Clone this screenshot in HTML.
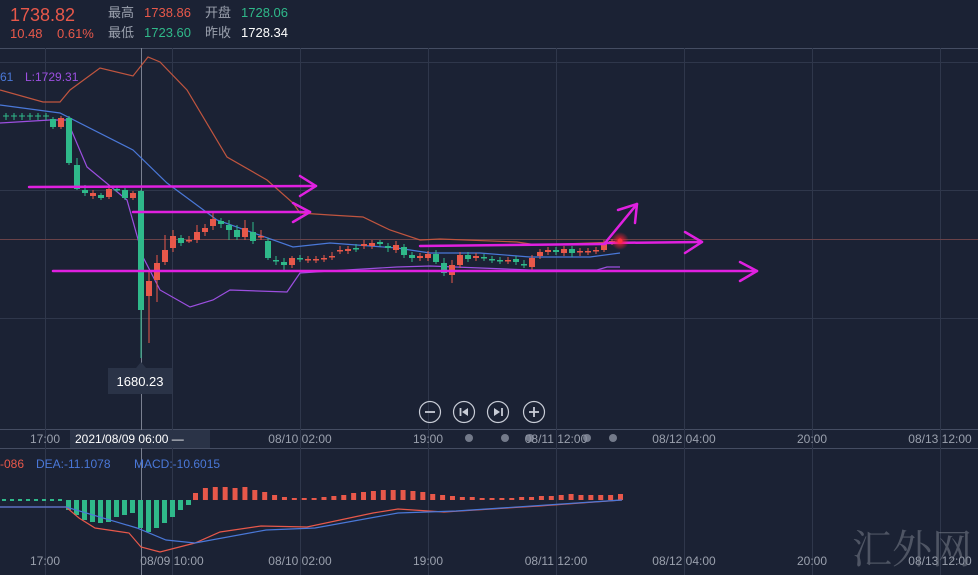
<!DOCTYPE html>
<html><head><meta charset="utf-8"><style>
html,body{margin:0;padding:0;background:#1b2234;width:978px;height:575px;overflow:hidden;font-family:"Liberation Sans","Noto Sans CJK SC",sans-serif}
svg{display:block}
</style></head><body>
<svg id="s" width="978" height="575" xmlns="http://www.w3.org/2000/svg" font-family="Liberation Sans, Noto Sans CJK SC, sans-serif">
<rect width="978" height="575" fill="#1b2234"/>
<defs><radialGradient id="g"><stop offset="0" stop-color="#ff2030" stop-opacity="1"/><stop offset="1" stop-color="#ff2030" stop-opacity="0"/></radialGradient></defs>
<g stroke="#2f374b" stroke-width="1" id="grid">
<line x1="0" y1="48.5" x2="978" y2="48.5" stroke="#454d62"/>
<line x1="0" y1="62.5" x2="978" y2="62.5"/>
<line x1="0" y1="190.5" x2="978" y2="190.5"/>
<line x1="0" y1="318.5" x2="978" y2="318.5"/>
<line x1="0" y1="429.5" x2="978" y2="429.5" stroke="#454d62"/>
<line x1="0" y1="448.5" x2="978" y2="448.5" stroke="#454d62"/>
</g>
<line x1="0" y1="239.5" x2="978" y2="239.5" stroke="#6a4248" stroke-width="1"/>
<line x1="141.5" y1="48" x2="141.5" y2="575" stroke="#7a8090" stroke-width="1"/>
<text x="10" y="21" font-size="18" fill="#e8584a">1738.82</text>
<text x="10" y="38" font-size="13" fill="#e8584a">10.48</text>
<text x="57" y="38" font-size="13" fill="#e8584a">0.61%</text>
<text x="108" y="17" font-size="13" fill="#9aa0ad">最高</text>
<text x="144" y="17" font-size="13" fill="#e8584a">1738.86</text>
<text x="205" y="17" font-size="13" fill="#9aa0ad">开盘</text>
<text x="241" y="17" font-size="13" fill="#2fb98a">1728.06</text>
<text x="108" y="37" font-size="13" fill="#9aa0ad">最低</text>
<text x="144" y="37" font-size="13" fill="#2fb98a">1723.60</text>
<text x="205" y="37" font-size="13" fill="#9aa0ad">昨收</text>
<text x="241" y="37" font-size="13" fill="#ffffff">1728.34</text>
<text x="0" y="81" font-size="12" fill="#4a78d8">61</text>
<text x="25" y="81" font-size="12" fill="#9c4fe0">L:1729.31</text>
<polyline fill="none" stroke="#c0553f" stroke-width="1.2" points="0,90 43,102 60,102 70,90 100,68 133,76 148,57 160,62 187,90 227,157 267,180 293,203 300,213 330,215 363,217 390,230 420,240 440,239 517,242 537,245 617,242"/>
<polyline fill="none" stroke="#4a78d8" stroke-width="1.2" points="0,105 60,113 133,150 167,183 217,220 293,247 330,243 397,248 430,253 480,253 530,257 590,257 620,253"/>
<polyline fill="none" stroke="#9c4fe0" stroke-width="1.2" points="0,123 50,120 67,120 87,167 127,200 143,257 160,290 190,307 213,300 230,290 287,292 300,273 330,271 397,267 430,266 530,270 597,270 607,267 620,267"/>
<g id="candles"></g>
<g stroke="#e020e0" stroke-width="2.5" fill="none" stroke-linecap="round" stroke-linejoin="round">
<line x1="29" y1="187" x2="316" y2="186"/><polyline points="300,176 316,186 300,196"/>
<line x1="133" y1="212" x2="310" y2="212"/><polyline points="293,203 310,212 293,222"/>
<line x1="53" y1="271" x2="757" y2="271"/><polyline points="740,262 757,271 740,281"/>
<line x1="420" y1="246" x2="605" y2="244"/>
<line x1="605" y1="243" x2="702" y2="242"/><polyline points="685,232 702,242 685,253"/>
<line x1="605" y1="243" x2="637" y2="204"/><polyline points="618,210 637,204 635,223"/>
</g>
<circle cx="620" cy="241" r="9" fill="url(#g)"/>
<circle cx="620" cy="241" r="2.5" fill="#ff3040"/>
<polygon points="136,368 141,362 146,368" fill="#2a3347"/>
<rect x="108" y="368" width="64" height="26" fill="#2a3347"/>
<text x="140" y="386" font-size="13" fill="#ffffff" text-anchor="middle">1680.23</text>
<g stroke="#c8ccd6" stroke-width="1.2" fill="none">
<circle cx="430" cy="412" r="10.5"/><circle cx="464" cy="412" r="10.5"/><circle cx="498" cy="412" r="10.5"/><circle cx="534" cy="412" r="10.5"/>
<line x1="425" y1="412" x2="435" y2="412" stroke-width="1.8"/>
<line x1="529" y1="412" x2="539" y2="412" stroke-width="1.8"/><line x1="534" y1="407" x2="534" y2="417" stroke-width="1.8"/>
<line x1="460.5" y1="408" x2="460.5" y2="416" stroke-width="1.8"/>
<line x1="502" y1="408" x2="502" y2="416" stroke-width="1.8"/>
</g>
<polygon points="468,408 468,416 462,412" fill="#c8ccd6"/>
<polygon points="494,408 494,416 500,412" fill="#c8ccd6"/>
<rect x="70" y="430" width="140" height="18" fill="#2a3347"/>
<g font-size="12" fill="#9aa0ad">
<text x="45" y="443" text-anchor="middle">17:00</text>
<text x="75" y="443" fill="#ffffff">2021/08/09 06:00 —</text>
<text x="300" y="443" text-anchor="middle">08/10 02:00</text>
<text x="428" y="443" text-anchor="middle">19:00</text>
<text x="556" y="443" text-anchor="middle">08/11 12:00</text>
<text x="684" y="443" text-anchor="middle">08/12 04:00</text>
<text x="812" y="443" text-anchor="middle">20:00</text>
<text x="940" y="443" text-anchor="middle">08/13 12:00</text>
</g>
<g fill="#8a90a0" opacity="0.8"><circle cx="469" cy="438" r="4"/><circle cx="505" cy="438" r="4"/><circle cx="530" cy="438" r="4"/><circle cx="587" cy="438" r="4"/><circle cx="613" cy="438" r="4"/></g>
<text x="0" y="468" font-size="12" fill="#e8584a">-086</text>
<text x="36" y="468" font-size="12" fill="#4a78d8">DEA:-11.1078</text>
<text x="134" y="468" font-size="12" fill="#4a78d8">MACD:-10.6015</text>
<g id="bars"></g>
<polyline fill="none" stroke="#e8584a" stroke-width="1.2" points="0,507 66,507 79,518 95,528 129,533 141,547 160,552 195,543 220,532 261,526 307,527 373,513 398,509 444,512 539,506 622,500"/>
<polyline fill="none" stroke="#4a78d8" stroke-width="1.2" points="0,507 66,507 137,528 166,540 195,543 266,530 315,528 398,513 456,511 622,500"/>
<g font-size="12" fill="#9aa0ad" text-anchor="middle">
<text x="45" y="565">17:00</text>
<text x="172" y="565">08/09 10:00</text>
<text x="300" y="565">08/10 02:00</text>
<text x="428" y="565">19:00</text>
<text x="556" y="565">08/11 12:00</text>
<text x="684" y="565">08/12 04:00</text>
<text x="812" y="565">20:00</text>
<text x="940" y="565">08/13 12:00</text>
</g>
<text x="912" y="563" font-size="40" fill="#7a808c" opacity="0.55" text-anchor="middle" font-family="Noto Serif CJK SC, serif">汇外网</text>
</svg>
<script>
var NS="http://www.w3.org/2000/svg";
function el(p,t,a){var e=document.createElementNS(NS,t);for(var k in a)e.setAttribute(k,a[k]);p.appendChild(e);return e;}
var g=document.getElementById('grid');
[45,172,300,428,556,684,812,940].forEach(function(x){el(g,'line',{x1:x+.5,y1:48,x2:x+.5,y2:575});});
var G="#2fb98a",R="#e8584a";
var c=[[53,119,127,G],[61,118,127,R],[69,118,163,G],[77,165,189,G,158,190],[85,190,193,G,185,196],[93,193,196,R,190,199],[101,195,198,G],[109,189,197,R],[117,189,190,G],[125,190,198,G],[133,193,198,R],[141,191,310,G,190,358],[149,281,296,R,270,343],[157,263,280,R,255,302],[165,250,262,R,235,265],[173,236,248,R,230,252],[181,238,243,G,235,246],[189,240,241,R,236,243],[197,232,240,R,225,243],[205,228,232,R,224,236],[213,219,226,R,212,230],[221,221,224,G,218,228],[229,225,230,G,220,240],[237,230,237,G,225,240],[245,228,237,R,220,240],[253,232,241,G,222,244],[261,236,237,R,230,240],[268,241,258,G,238,260],[276,260,261,G,256,265],[284,262,265,G,258,270],[292,258,265,R,256,268],[300,258,259,G,255,262],[308,259,260,R,256,263],[316,259,260,R,256,263],[324,258,259,R,255,262],[332,256,257,R,252,260],[340,250,251,R,246,254],[348,249,251,R,246,254],[356,248,249,G,244,252],[364,244,246,R,240,249],[372,243,246,R,240,249],[380,242,244,G,240,247],[388,246,248,G,243,252],[396,245,250,R,241,253],[404,247,255,G,244,258],[412,255,258,G,252,262],[420,256,258,R,253,261],[428,254,258,R,251,261],[436,254,262,G,250,264],[444,263,273,G,258,276],[452,265,275,R,260,283],[460,255,265,R,252,268],[468,255,259,G,252,262],[476,256,258,R,253,261],[484,257,258,G,254,261],[492,259,260,G,256,263],[500,260,261,G,257,264],[508,260,261,R,257,264],[516,259,262,G,256,265],[524,264,265,G,260,268],[532,258,267,R,255,270],[540,252,256,R,249,259],[548,250,252,R,247,255],[556,250,252,G,247,255],[564,249,253,R,246,256],[572,249,253,G,246,257],[580,251,252,R,248,256],[588,251,252,R,248,255],[596,250,251,R,247,254],[604,244,250,R,240,252],[612,241,243,R,239,245]];
var cg=document.getElementById('candles');
for(var x=3;x<46;x+=8){el(cg,'line',{x1:x,y1:116,x2:x+6,y2:116,stroke:G,'stroke-width':1});el(cg,'line',{x1:x+3,y1:113,x2:x+3,y2:120,stroke:G,'stroke-width':1});}
c.forEach(function(d){var col=d[3];var wt=d[4]||d[1]-2,wb=d[5]||d[2]+2;
el(cg,'line',{x1:d[0],y1:wt,x2:d[0],y2:wb,stroke:col,'stroke-width':1});
el(cg,'rect',{x:d[0]-3,y:d[1],width:6,height:Math.max(1.5,d[2]-d[1]),fill:col});});
var bg=document.getElementById('bars');
for(var x=2;x<64;x+=8)el(bg,'rect',{x:x,y:499,width:4,height:2,fill:G});
var gb=[510,515,520,522,523,522,517,515,513,528,532,528,523,517,510,505];
gb.forEach(function(b,i){var x=66+i*8;el(bg,'rect',{x:x,y:500,width:5,height:b-500,fill:G});});
var rt=[493,488,487,487,488,487,490,492,495,497,498,498,498,497,496,495,493,492,491,490,490,490,491,492,494,495,496,497,497,498,498,498,498,497,497,496,496,495,494,495,495,495,495,494];
var x0=195,sp=(620-x0)/(rt.length-1);
for(var i=0;i<rt.length;i++){var x=x0+i*sp;el(bg,'rect',{x:x-2,y:rt[i],width:5,height:500-rt[i],fill:R});}
</script>
</body></html>
